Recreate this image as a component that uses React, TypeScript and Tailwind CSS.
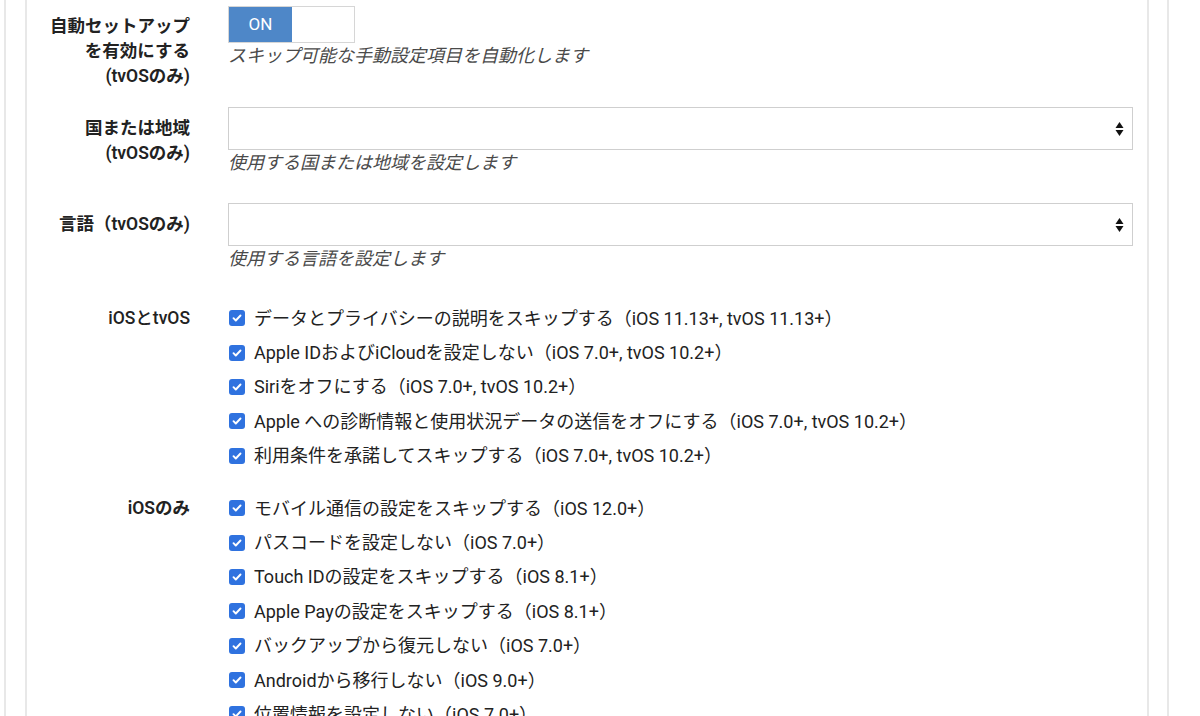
import React from 'react';

const font = { fontFamily: 'Roboto, "Noto Sans CJK JP", sans-serif' };

const bothItems = [
  'データとプライバシーの説明をスキップする（iOS 11.13+, tvOS 11.13+）',
  'Apple IDおよびiCloudを設定しない（iOS 7.0+, tvOS 10.2+）',
  'Siriをオフにする（iOS 7.0+, tvOS 10.2+）',
  'Apple への診断情報と使用状況データの送信をオフにする（iOS 7.0+, tvOS 10.2+）',
  '利用条件を承諾してスキップする（iOS 7.0+, tvOS 10.2+）',
];

const iosItems = [
  'モバイル通信の設定をスキップする（iOS 12.0+）',
  'パスコードを設定しない（iOS 7.0+）',
  'Touch IDの設定をスキップする（iOS 8.1+）',
  'Apple Payの設定をスキップする（iOS 8.1+）',
  'バックアップから復元しない（iOS 7.0+）',
  'Androidから移行しない（iOS 9.0+）',
  '位置情報を設定しない（iOS 7.0+）',
];

function Checkbox() {
  return (
    <span className="flex h-4 w-4 shrink-0 items-center justify-center rounded-[3px] bg-[#2f72df]">
      <svg width="12" height="12" viewBox="0 0 12 12" fill="none">
        <path d="M2.5 6.2l2.3 2.3 4.7-5" stroke="white" strokeWidth="1.9" strokeLinecap="round" strokeLinejoin="round" />
      </svg>
    </span>
  );
}

function SelectBox() {
  return (
    <div className="flex h-[43px] w-[905px] items-center justify-end border border-[#cfcfcf] bg-white pr-[8px]">
      <svg width="9" height="16" viewBox="0 0 9 16">
        <path d="M4.5 1L8.5 7H0.5z" fill="#111" />
        <path d="M4.5 15L8.5 9H0.5z" fill="#111" />
      </svg>
    </div>
  );
}

function Label({ children, className = '' }: { children: React.ReactNode; className?: string }) {
  return (
    <div className={`w-[163px] shrink-0 text-right text-[17.5px] leading-[25px] text-[#222] ${className}`}>{children}</div>
  );
}

function Desc({ children }: { children: React.ReactNode }) {
  return <p className="text-[18px] leading-[26px] italic text-[#4a4a4a]">{children}</p>;
}

function CheckList({ items }: { items: string[] }) {
  return (
    <div className="flex flex-col">
      {items.map((t) => (
        <div key={t} className="flex h-[34.4px] items-center gap-[9px] pl-[1px] text-[18px] text-[#222]">
          <Checkbox />
          <span className="whitespace-nowrap">{t}</span>
        </div>
      ))}
    </div>
  );
}

export default function App() {
  return (
    <div className="h-[716px] w-full overflow-hidden bg-white" style={font}>
      <div className="ml-[4px] h-full w-[1165px] border-x-2 border-[#e8e8e8] pr-[18px] pl-[19px]">
        <div className="h-full border-x-2 border-[#e8e8e8]">
          {/* auto setup */}
          <div className="flex gap-[38px] pt-[6px]">
            <Label className="pt-[8px] font-semibold">
              自動セットアップ
              <br />
              を有効にする
              <br />
              (tvOSのみ)
            </Label>
            <div>
              <div className="flex h-[37px] w-[127px] border border-[#d6d6d6]">
                <div className="flex w-[63px] items-center justify-center bg-[#4e87c8] text-[17px] text-white">
                  ON
                </div>
                <div className="flex-1 bg-white" />
              </div>
              <Desc>スキップ可能な手動設定項目を自動化します</Desc>
            </div>
          </div>

          {/* region */}
          <div className="mt-[18px] flex gap-[38px]">
            <Label className="pt-[9px] font-semibold">
              国または地域
              <br />
              (tvOSのみ)
            </Label>
            <div>
              <SelectBox />
              <Desc>使用する国または地域を設定します</Desc>
            </div>
          </div>

          {/* language */}
          <div className="mt-[27px] flex gap-[38px]">
            <Label className="pt-[9px] font-semibold">言語（tvOSのみ)</Label>
            <div>
              <SelectBox />
              <Desc>使用する言語を設定します</Desc>
            </div>
          </div>

          {/* iOS and tvOS */}
          <div className="mt-[29px] flex gap-[38px]">
            <Label className="pt-[5px] font-medium">iOSとtvOS</Label>
            <CheckList items={bothItems} />
          </div>

          {/* iOS only */}
          <div className="mt-[18px] flex gap-[38px]">
            <Label className="pt-[5px] font-semibold">iOSのみ</Label>
            <CheckList items={iosItems} />
          </div>
        </div>
      </div>
    </div>
  );
}
